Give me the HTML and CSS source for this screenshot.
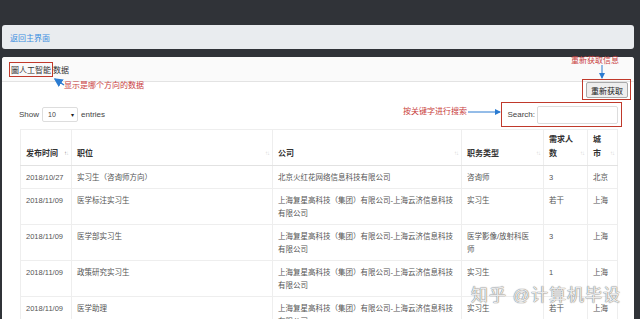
FILE: index.html
```html
<!DOCTYPE html>
<html lang="zh-CN">
<head>
    <meta charset="UTF-8">
    <title>人工智能 数据</title>
    <link rel="stylesheet" href="styles.css">
</head>
<body>
    <div class="page">
        <div class="crumb"><a href="#">返回主界面</a></div>

        <div class="card">
            <div class="card-head"><span class="mark">圖人工智能</span>数据</div>
            <div class="card-body">
                <div class="actions">
                    <span class="mark-btn"><button class="btn">重新获取</button></span>
                </div>
                <div class="dt-top">
                    <label class="len">Show <span class="select">10<i>▾</i></span> entries</label>
                    <label class="search-box">Search: <input type="text"></label>
                </div>
                <table class="grid">
                    <colgroup>
                        <col style="width:51px">
                        <col style="width:201px">
                        <col style="width:189px">
                        <col style="width:82px">
                        <col style="width:44px">
                        <col style="width:30px">
                    </colgroup>
                    <thead>
                        <tr>
                            <th>发布时间<span class="sort"><b>↑</b>↓</span></th>
                            <th>职位<span class="sort">↑↓</span></th>
                            <th>公司<span class="sort">↑↓</span></th>
                            <th>职务类型<span class="sort">↑↓</span></th>
                            <th>需求人数<span class="sort">↑↓</span></th>
                            <th>城市<span class="sort">↑↓</span></th>
                        </tr>
                    </thead>
                    <tbody>
                        <tr>
                            <td>2018/10/27</td>
                            <td>实习生（咨询师方向）</td>
                            <td class="co">北京火红花网络信息科技有限公司</td>
                            <td>咨询师</td>
                            <td>3</td>
                            <td>北京</td>
                        </tr>
                        <tr>
                            <td>2018/11/09</td>
                            <td>医学标注实习生</td>
                            <td class="co">上海复星高科技（集团）有限公司-上海云济信息科技有限公司</td>
                            <td>实习生</td>
                            <td>若干</td>
                            <td>上海</td>
                        </tr>
                        <tr>
                            <td>2018/11/09</td>
                            <td>医学部实习生</td>
                            <td class="co">上海复星高科技（集团）有限公司-上海云济信息科技有限公司</td>
                            <td>医学影像/放射科医师</td>
                            <td>3</td>
                            <td>上海</td>
                        </tr>
                        <tr>
                            <td>2018/11/09</td>
                            <td>政策研究实习生</td>
                            <td class="co">上海复星高科技（集团）有限公司-上海云济信息科技有限公司</td>
                            <td>实习生</td>
                            <td>1</td>
                            <td>上海</td>
                        </tr>
                        <tr>
                            <td>2018/11/09</td>
                            <td>医学助理</td>
                            <td class="co">上海复星高科技（集团）有限公司-上海云济信息科技有限公司</td>
                            <td>实习生</td>
                            <td>若干</td>
                            <td>上海</td>
                        </tr>
                    </tbody>
                </table>
            </div>
        </div>

        <!-- annotations drawn over the screenshot -->
        <div class="note note-dir">显示是哪个方向的数据</div>
        <div class="note note-reload">重新获取信息</div>
        <div class="note note-search">按关键字进行搜索</div>
        <svg class="arrows" width="640" height="319" viewBox="0 0 640 319">
            <defs>
                <marker id="tip" markerWidth="6" markerHeight="6" refX="5" refY="3" orient="auto">
                    <path d="M0,0 L6,3 L0,6 Z" fill="#2a7bd1"/>
                </marker>
            </defs>
            <line x1="64" y1="85" x2="55" y2="79" stroke="#2a7bd1" stroke-width="1.5" marker-end="url(#tip)"/>
            <line x1="602" y1="65" x2="602" y2="78" stroke="#2a7bd1" stroke-width="1" marker-end="url(#tip)"/>
            <line x1="468" y1="112" x2="500" y2="112" stroke="#2a7bd1" stroke-width="1" marker-end="url(#tip)"/>
        </svg>

        <div class="watermark">知乎 @计算机毕设</div>
    </div>
</body>
</html>
```

FILE: styles.css
```css
body {
    margin: 0;
    background-color: #303338;
    font-family: "Liberation Sans", "Noto Sans CJK SC", sans-serif;
    font-size: 8px;
    color: #555;
    overflow: hidden;
}

.page {
    position: relative;
    height: 319px;
    padding: 25px 6px 0 2px;
    box-sizing: border-box;
}

.crumb {
    height: 24px;
    display: flex;
    align-items: center;
    padding: 0 8px;
    background-color: #e9ecef;
    border-radius: 3px;
    margin-bottom: 8px;
}

.crumb a {
    color: #3d8fe0;
    text-decoration: none;
}

.card {
    background: #ffffff;
    border-radius: 3px;
    height: 300px;
}

.card-head {
    height: 24px;
    display: flex;
    align-items: center;
    padding: 0 7px;
    border-bottom: 1px solid #e3e3e3;
    background-color: #fafafa;
    color: #333;
    border-radius: 3px 3px 0 0;
}

.mark {
    border: 1px solid #c0392b;
    padding: 1px 1px;
}

.card-body {
    padding: 0 3px 0 18px;
}

.actions {
    display: flex;
    justify-content: flex-end;
    margin-top: -3px;
}

.mark-btn {
    display: flex;
    border: 1px solid #c0392b;
    padding: 2px 2px 1px 3px;
}

.btn {
    height: 16px;
    padding: 0 4px;
    border: 1px solid #aaa;
    border-radius: 2px;
    background: #eeeeee;
    font-family: inherit;
    font-size: 8px;
    color: #222;
}

.dt-top {
    display: flex;
    align-items: center;
    justify-content: space-between;
    margin-top: 2px;
    padding-right: 9px;
}

.len {
    display: flex;
    align-items: center;
    gap: 3px;
    margin-left: -1px;
    color: #444;
}

.select {
    display: flex;
    justify-content: space-between;
    align-items: center;
    width: 26px;
    height: 13px;
    padding: 0 3px 0 5px;
    border: 1px solid #ddd;
    border-radius: 2px;
    font-size: 7px;
}

.select i {
    font-style: normal;
    font-size: 6px;
    color: #222;
}

.search-box {
    display: flex;
    align-items: center;
    gap: 2px;
    height: 23px;
    padding: 0 3px 0 5px;
    border: 1px solid #c0392b;
    color: #444;
}

.search-box input {
    width: 79px;
    height: 16px;
    margin: 0;
    padding: 0;
    border: 1px solid #ddd;
    border-radius: 2px;
}

.grid {
    margin-top: 2px;
    width: 597px;
    table-layout: fixed;
    border-collapse: collapse;
    border: 1px solid #eee;
}

.grid th,
.grid td {
    border-left: 1px solid #eee;
    text-align: left;
}

.grid th {
    position: relative;
    vertical-align: bottom;
    padding: 3px 12px 4px 5px;
    line-height: 14px;
    color: #333;
    font-weight: bold;
    border-bottom: 1px solid #e2e2e2;
}

.grid td {
    border-top: 1px solid #eee;
    padding: 5px 8px 4px 5px;
    line-height: 13px;
    font-size: 7.5px;
    vertical-align: top;
    color: #555;
}

.grid td.co {
    padding-right: 8px;
    word-break: break-all;
}

.grid td:last-child {
    padding-right: 2px;
}

.sort {
    position: absolute;
    right: 3px;
    bottom: 5px;
    font-size: 6px;
    font-weight: normal;
    color: #d4d4d4;
    letter-spacing: -1px;
}

.sort b {
    font-weight: normal;
    color: #888;
}

.note {
    position: absolute;
    color: #c94040;
    font-size: 8px;
    line-height: 12px;
}

.note-dir {
    left: 64px;
    top: 80px;
}

.note-reload {
    left: 571px;
    top: 55px;
}

.note-search {
    left: 403px;
    top: 106px;
}

.arrows {
    position: absolute;
    left: 0;
    top: 0;
    pointer-events: none;
}

.watermark {
    position: absolute;
    left: 471px;
    top: 281px;
    font-size: 17px;
    color: rgba(255, 255, 255, 0.85);
    text-shadow: 0 0 1px #777, 0 0 1px #777;
    letter-spacing: 1px;
}
```
